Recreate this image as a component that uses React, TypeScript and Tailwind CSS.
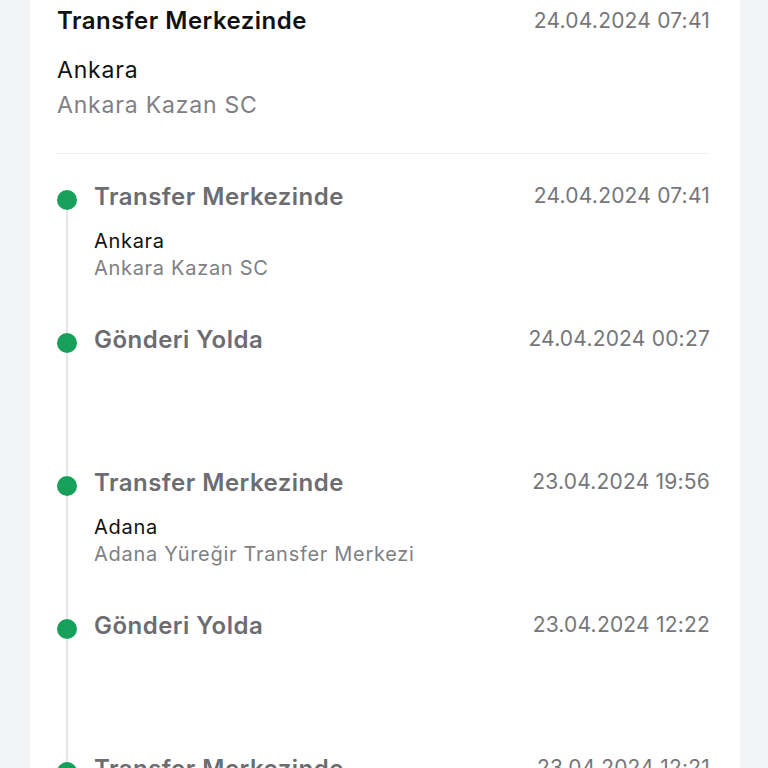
const events = [
  { title: "Transfer Merkezinde", date: "24.04.2024 07:41", city: "Ankara", place: "Ankara Kazan SC" },
  { title: "Gönderi Yolda", date: "24.04.2024 00:27" },
  { title: "Transfer Merkezinde", date: "23.04.2024 19:56", city: "Adana", place: "Adana Yüreğir Transfer Merkezi" },
  { title: "Gönderi Yolda", date: "23.04.2024 12:22" },
  { title: "Transfer Merkezinde", date: "23.04.2024 12:21", city: "Adana", place: "Adana Yüreğir Transfer Merkezi" },
];

const App = () => {
  return (
    <div className="h-[768px] overflow-hidden bg-[#f3f4f6] font-['Inter',sans-serif]">
      <div className="ml-[30px] mr-[28px] h-full bg-white pl-[27px] pr-[30px]">
        <div className="flex items-start justify-between pt-[5px]">
          <span className="text-[24px] font-semibold leading-[32px] tracking-[0.02em] text-[#111111]">Transfer Merkezinde</span>
          <span className="text-[21px] leading-[32px] tracking-[0.01em] text-[#76767a]">24.04.2024 07:41</span>
        </div>
        <div className="mt-[18px] text-[23px] leading-[30px] tracking-[0.035em] text-[#111111]">Ankara</div>
        <div className="mt-[5px] text-[23px] leading-[30px] tracking-[0.035em] text-[#808084]">Ankara Kazan SC</div>
        <div className="-ml-px mt-[33px] border-t border-[#f0f0f2]" />

        <div className="pt-[27px]">
          {events.map((ev, i) => (
            <div key={i} className="flex h-[143px]">
              <div className="flex w-5 flex-col items-center">
                <div className={`h-[9px] w-[2px] ${i === 0 ? "" : "bg-[#e6e6e8]"}`} />
                <div className="h-5 w-5 rounded-full bg-[#16a05a]" />
                <div className="w-[2px] flex-1 bg-[#e6e6e8]" />
              </div>
              <div className="ml-[17px] flex-1">
                <div className="flex items-start justify-between">
                  <span className="text-[24px] font-semibold leading-[32px] tracking-[0.02em] text-[#6c6c71]">{ev.title}</span>
                  <span className="text-[21px] leading-[30px] tracking-[0.01em] text-[#76767a]">{ev.date}</span>
                </div>
                {ev.city && (
                  <div className="mt-[15px]">
                    <div className="text-[20px] leading-[27px] tracking-[0.035em] text-[#111111]">{ev.city}</div>
                    <div className="text-[20px] leading-[27px] tracking-[0.035em] text-[#808084]">{ev.place}</div>
                  </div>
                )}
              </div>
            </div>
          ))}
        </div>
      </div>
    </div>
  );
};

export default App;
